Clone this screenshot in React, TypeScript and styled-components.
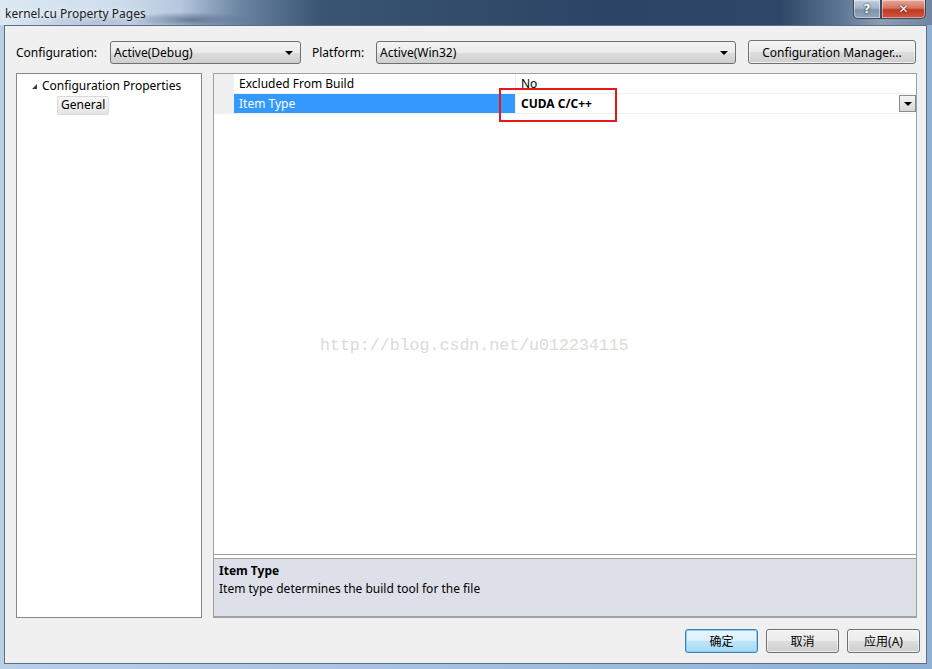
import React from "react";
import styled, { createGlobalStyle } from "styled-components";

const Global = createGlobalStyle`
  html, body { margin: 0; padding: 0; overflow: hidden; }
  body { font-family: "Noto Sans", "Noto Sans CJK SC", sans-serif; font-size: 12px; color: #000; }
`;

const Window = styled.div`
  width: 932px;
  height: 669px;
  display: flex;
  flex-direction: column;
  background: linear-gradient(90deg, #b9cfe6 0%, #a9c3de 40%, #8fb0d2 100%);
  overflow: hidden;
`;

const TitleBar = styled.div`
  height: 25px;
  flex: none;
  display: flex;
  align-items: flex-start;
  justify-content: space-between;
  background:
    radial-gradient(ellipse 90px 10px at 100px 22px, rgba(150,170,195,0.55), transparent),
    radial-gradient(ellipse 60px 8px at 190px 20px, rgba(70,95,125,0.7), transparent),
    linear-gradient(90deg, #dce8f3 0px, #cddced 120px, #b5c8dc 180px, #6b84a2 240px, #3a5474 320px, #2c4465 600px, #2e4768 780px, #5d7593 840px, #8a9db3 880px, #6f86a2 932px);
`;

const Title = styled.div`
  padding: 5px 0 0 5px;
  font-size: 12px;
  color: #1b1b1b;
  text-shadow: 0 0 6px rgba(255,255,255,0.9);
`;

const CaptionButtons = styled.div`
  display: flex;
  margin-right: 6px;
`;

const CapBtn = styled.div<{ $close?: boolean }>`
  width: ${(p) => (p.$close ? "45px" : "28px")};
  height: 19px;
  box-sizing: border-box;
  border: 1px solid #3b4a5e;
  border-top: none;
  border-radius: ${(p) => (p.$close ? "0 0 5px 0" : "0 0 0 5px")};
  display: flex;
  align-items: center;
  justify-content: center;
  color: #fff;
  font-weight: bold;
  font-family: "DejaVu Sans", sans-serif;
  font-size: 12px;
  text-shadow: 0 0 2px #000;
  background: ${(p) =>
    p.$close
      ? "linear-gradient(180deg, #e4a99a 0%, #d7735f 45%, #c0381f 55%, #d0573f 100%)"
      : "linear-gradient(180deg, #c4d0de 0%, #a3b3c7 45%, #7e92ab 55%, #93a6bd 100%)"};
  box-shadow: inset 0 0 0 1px rgba(255,255,255,0.45);
`;

const Frame = styled.div`
  flex: 1;
  display: flex;
  padding: 0 5px 5px 4px;
`;

const Client = styled.div`
  flex: 1;
  display: flex;
  flex-direction: column;
  background: #f0f0f0;
  border: 1px solid #5c6e85;
  padding: 14px 0 10px 11px;
`;

const Toolbar = styled.div`
  height: 24px;
  display: flex;
  align-items: center;
  margin-bottom: 9px;
`;

const Label = styled.span<{ $w: number; $pad?: number }>`
  width: ${(p) => p.$w}px;
  padding-left: ${(p) => p.$pad ?? 0}px;
  flex: none;
  white-space: nowrap;
`;

const Combo = styled.div<{ $w: number }>`
  width: ${(p) => p.$w}px;
  height: 23px;
  box-sizing: border-box;
  flex: none;
  border: 1px solid #707070;
  border-radius: 3px;
  background: linear-gradient(180deg, #f2f2f2 0%, #ebebeb 50%, #dddddd 51%, #cfcfcf 100%);
  display: flex;
  align-items: center;
  justify-content: space-between;
  padding: 0 7px 0 3px;
  margin-top: 1px;
`;

const Arrow = styled.span`
  width: 0;
  height: 0;
  border-left: 4px solid transparent;
  border-right: 4px solid transparent;
  border-top: 4px solid #000;
`;

const Spacer = styled.span<{ $w: number }>`
  width: ${(p) => p.$w}px;
  flex: none;
`;

const Button = styled.div<{ $w: number; $focus?: boolean }>`
  width: ${(p) => p.$w}px;
  height: 24px;
  box-sizing: border-box;
  flex: none;
  border: 1px solid ${(p) => (p.$focus ? "#3c7fb1" : "#707070")};
  border-radius: 3px;
  background: ${(p) =>
    p.$focus
      ? "linear-gradient(180deg, #eaf6fd 0%, #d9f0fc 50%, #bee6fd 51%, #a7d9f5 100%)"
      : "linear-gradient(180deg, #f2f2f2 0%, #ebebeb 50%, #dddddd 51%, #cfcfcf 100%)"};
  box-shadow: ${(p) => (p.$focus ? "inset 0 0 0 1px #8ed0f2" : "inset 0 0 0 1px rgba(255,255,255,0.6)")};
  display: flex;
  align-items: center;
  justify-content: center;
`;

const Main = styled.div`
  flex: 1;
  display: flex;
  gap: 11px;
  min-height: 0;
`;

const Tree = styled.div`
  width: 186px;
  box-sizing: border-box;
  border: 1px solid #828790;
  background: #fff;
  padding-top: 1px;
`;

const TreeRow = styled.div<{ $indent: number }>`
  height: 20px;
  display: flex;
  align-items: center;
  padding-left: ${(p) => p.$indent}px;
`;

const Expander = styled.span`
  width: 0;
  height: 0;
  border-left: 5px solid transparent;
  border-bottom: 5px solid #3c3c3c;
  margin-right: 5px;
  margin-top: 2px;
`;

const TreeSelected = styled.span`
  border: 1px solid #d9d9d9;
  border-radius: 2px;
  background: linear-gradient(180deg, #f8f8f8, #e5e5e5);
  padding: 0 3px 1px 3px;
  line-height: 16px;
`;

const Grid = styled.div`
  width: 704px;
  box-sizing: border-box;
  border: 1px solid #a0a0a0;
  border-bottom-width: 2px;
  display: flex;
  flex-direction: column;
  position: relative;
`;

const List = styled.div`
  flex: 1;
  background: #fff;
  border-bottom: 1px solid #a0a0a0;
`;

const Row = styled.div`
  height: 20px;
  display: flex;
  border-bottom: 1px solid #f0f0f0;
  box-sizing: border-box;
`;

const Gutter = styled.div`
  width: 20px;
  background: #f0f0f0;
  flex: none;
`;

const NameCell = styled.div<{ $sel?: boolean }>`
  width: 282px;
  flex: none;
  padding-left: 5px;
  box-sizing: border-box;
  display: flex;
  align-items: center;
  background: ${(p) => (p.$sel ? "#3399ff" : "#fff")};
  color: ${(p) => (p.$sel ? "#fff" : "#000")};
  border-right: 1px solid #f0f0f0;
`;

const ValueCell = styled.div<{ $bold?: boolean }>`
  flex: 1;
  display: flex;
  align-items: center;
  justify-content: space-between;
  padding-left: 5px;
  font-weight: ${(p) => (p.$bold ? "bold" : "normal")};
`;

const DropBtn = styled.div`
  width: 17px;
  height: 17px;
  box-sizing: border-box;
  border: 1px solid #8a8a8a;
  background: linear-gradient(180deg, #f4f4f4, #d8d8d8);
  display: flex;
  align-items: center;
  justify-content: center;
`;

const Splitter = styled.div`
  height: 3px;
  background: #fff;
  border-bottom: 1px solid #a0a0a0;
`;

const Desc = styled.div`
  height: 57px;
  background: #dde0e8;
  padding: 3px 5px 0 5px;
  box-sizing: border-box;
`;

const DescTitle = styled.div`
  font-weight: bold;
  line-height: 17px;
`;

const DescText = styled.div`
  line-height: 17px;
  margin-top: 1px;
`;

const Highlight = styled.div`
  position: absolute;
  left: 285px;
  top: 14px;
  width: 118px;
  height: 34px;
  box-sizing: border-box;
  border: 2px solid #e41a1a;
`;

const Watermark = styled.div`
  position: absolute;
  left: 106px;
  top: 262px;
  font-family: "Liberation Mono", monospace;
  font-size: 16.6px;
  color: #dcdad6;
  white-space: nowrap;
`;

const Footer = styled.div`
  height: 24px;
  margin-top: 11px;
  display: flex;
  justify-content: flex-end;
  gap: 8px;
  padding-right: 6px;
`;

export default function App() {
  return (
    <>
      <Global />
      <Window>
        <TitleBar>
          <Title>kernel.cu Property Pages</Title>
          <CaptionButtons>
            <CapBtn>?</CapBtn>
            <CapBtn $close>✕</CapBtn>
          </CaptionButtons>
        </TitleBar>
        <Frame>
          <Client>
            <Toolbar>
              <Label $w={94}>Configuration:</Label>
              <Combo $w={191}>
                <span>Active(Debug)</span>
                <Arrow />
              </Combo>
              <Label $w={64} $pad={11}>Platform:</Label>
              <Combo $w={360}>
                <span>Active(Win32)</span>
                <Arrow />
              </Combo>
              <Spacer $w={12} />
              <Button $w={168}>Configuration Manager...</Button>
            </Toolbar>
            <Main>
              <Tree>
                <TreeRow $indent={15}>
                  <Expander />
                  Configuration Properties
                </TreeRow>
                <TreeRow $indent={40}>
                  <TreeSelected>General</TreeSelected>
                </TreeRow>
              </Tree>
              <Grid>
                <List>
                  <Row>
                    <Gutter />
                    <NameCell>Excluded From Build</NameCell>
                    <ValueCell>No</ValueCell>
                  </Row>
                  <Row>
                    <Gutter />
                    <NameCell $sel>Item Type</NameCell>
                    <ValueCell $bold>
                      CUDA C/C++
                      <DropBtn>
                        <Arrow />
                      </DropBtn>
                    </ValueCell>
                  </Row>
                </List>
                <Splitter />
                <Desc>
                  <DescTitle>Item Type</DescTitle>
                  <DescText>Item type determines the build tool for the file</DescText>
                </Desc>
                <Highlight />
                <Watermark>http://blog.csdn.net/u012234115</Watermark>
              </Grid>
            </Main>
            <Footer>
              <Button $w={73} $focus>确定</Button>
              <Button $w={73}>取消</Button>
              <Button $w={73}>应用(A)</Button>
            </Footer>
          </Client>
        </Frame>
      </Window>
    </>
  );
}
